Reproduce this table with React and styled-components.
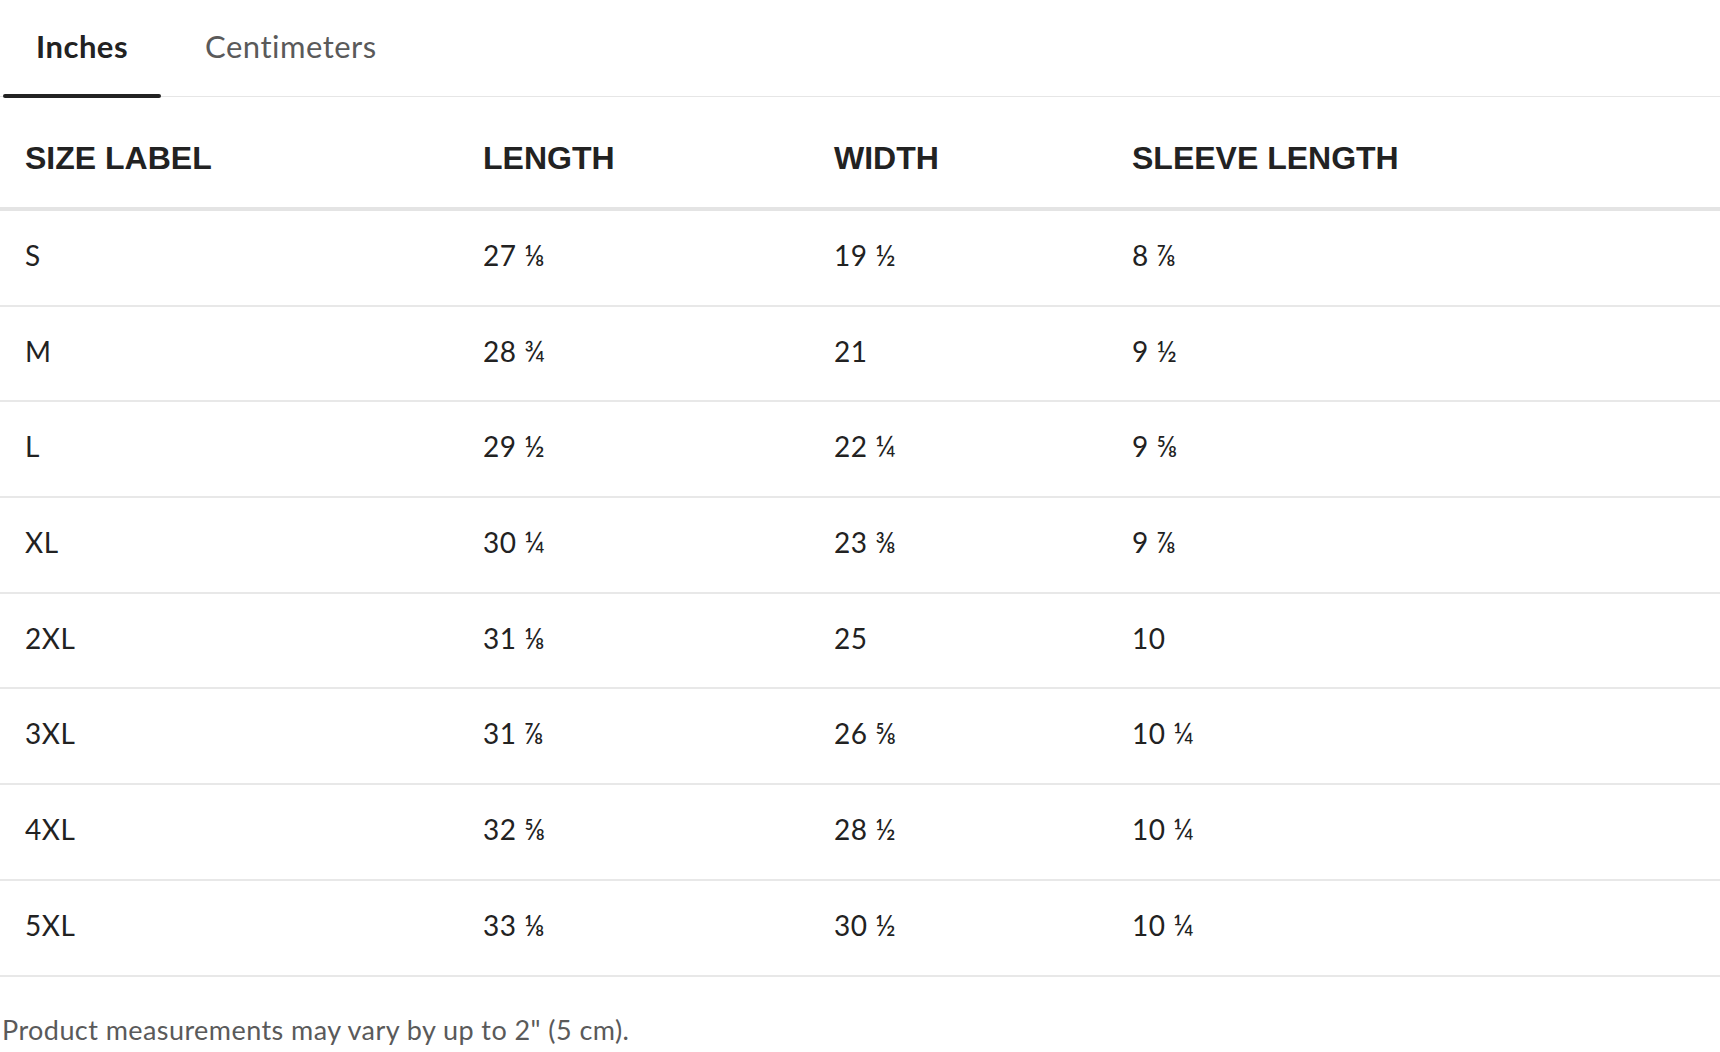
import { useState } from "react";
import styled, { createGlobalStyle } from "styled-components";

const GlobalStyle = createGlobalStyle`
  html, body {
    margin: 0;
    padding: 0;
    background: #ffffff;
  }
  body {
    font-family: Lato, "Noto Sans", sans-serif;
    color: #222222;
  }
`;

const Page = styled.div`
  width: 1720px;
  display: flex;
  flex-direction: column;
`;

const TabBar = styled.div`
  display: flex;
  align-items: flex-end;
  height: 96px;
  padding-left: 3px;
  border-bottom: 1px solid #e6e6e6;
  gap: 11px;
`;

const Tab = styled.button`
  position: relative;
  height: 100%;
  padding: 0 33px 4px;
  border: none;
  background: none;
  cursor: pointer;
  font-family: Lato, "Noto Sans", sans-serif;
  font-size: 31px;
  letter-spacing: 0.5px;
  font-weight: ${(p) => (p.$active ? 700 : 400)};
  color: ${(p) => (p.$active ? "#222222" : "#5a5a5a")};
  display: flex;
  align-items: center;

  &::after {
    content: "";
    display: ${(p) => (p.$active ? "block" : "none")};
    position: absolute;
    left: 0;
    right: 0;
    bottom: -2px;
    height: 4px;
    border-radius: 2px;
    background: #222222;
  }
`;

const Table = styled.div`
  display: flex;
  flex-direction: column;
`;

const Row = styled.div`
  display: grid;
  grid-template-columns: 458px 351px 298px 1fr;
  align-items: center;
  height: ${(p) => (p.$head ? "110px" : "93.7px")};
  border-bottom: ${(p) => (p.$head ? "4px solid #e4e4e4" : "2px solid #e8e8e8")};
`;

const HeadCell = styled.div`
  padding-left: 25px;
  padding-top: 12px;
  font-family: "Liberation Sans", Arial, sans-serif;
  font-weight: 700;
  font-size: 32px;
  color: #222222;
`;

const Cell = styled.div`
  padding-left: 25px;
  padding-bottom: 6px;
  font-size: 28px;
  letter-spacing: 0.5px;
  color: #222222;
`;

const Note = styled.p`
  margin: 36px 0 0 2px;
  font-size: 27px;
  letter-spacing: 0.43px;
  color: #5a5a5a;
`;

const inches = [
  ["S", "27 ⅛", "19 ½", "8 ⅞"],
  ["M", "28 ¾", "21", "9 ½"],
  ["L", "29 ½", "22 ¼", "9 ⅝"],
  ["XL", "30 ¼", "23 ⅜", "9 ⅞"],
  ["2XL", "31 ⅛", "25", "10"],
  ["3XL", "31 ⅞", "26 ⅝", "10 ¼"],
  ["4XL", "32 ⅝", "28 ½", "10 ¼"],
  ["5XL", "33 ⅛", "30 ½", "10 ¼"],
];

const cm = [
  ["S", "68.9", "49.5", "22.5"],
  ["M", "73", "53.3", "24.1"],
  ["L", "74.9", "56.5", "24.4"],
  ["XL", "76.8", "59.4", "25.1"],
  ["2XL", "79", "63.5", "25.4"],
  ["3XL", "81", "67.6", "26"],
  ["4XL", "82.9", "72.4", "26"],
  ["5XL", "84.1", "77.5", "26"],
];

const headers = ["SIZE LABEL", "LENGTH", "WIDTH", "SLEEVE LENGTH"];

function App() {
  const [unit, setUnit] = useState("in");
  const rows = unit === "in" ? inches : cm;

  return (
    <>
      <GlobalStyle />
      <Page>
        <TabBar>
          <Tab $active={unit === "in"} onClick={() => setUnit("in")}>
            Inches
          </Tab>
          <Tab $active={unit === "cm"} onClick={() => setUnit("cm")}>
            Centimeters
          </Tab>
        </TabBar>
        <Table>
          <Row $head>
            {headers.map((h) => (
              <HeadCell key={h}>{h}</HeadCell>
            ))}
          </Row>
          {rows.map((r) => (
            <Row key={r[0]}>
              {r.map((v, i) => (
                <Cell key={i}>{v}</Cell>
              ))}
            </Row>
          ))}
        </Table>
        <Note>Product measurements may vary by up to 2" (5 cm).</Note>
      </Page>
    </>
  );
}

export default App;
